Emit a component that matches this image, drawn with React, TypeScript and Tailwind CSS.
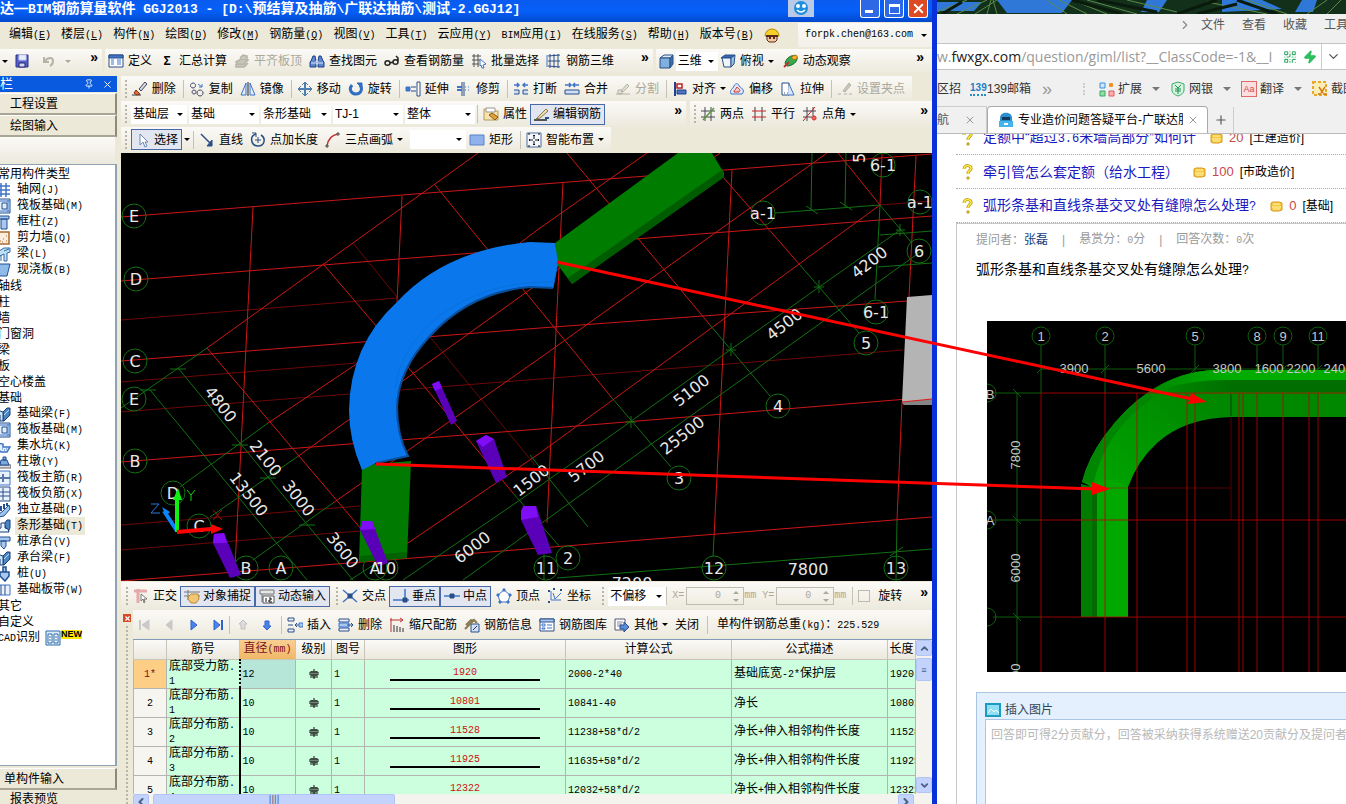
import { ReactNode } from 'react'
import { ChevronDown, ChevronUp, ChevronLeft, ChevronRight, Plus, X, Zap, QrCode, Pin } from 'lucide-react'

// [path, stroke, fill, stroke width]
type Shape = [string, string, string?, number?]

const NAVY = '#2a4f86'
const BLUE = '#3f74c8'
const SKY = '#a9c8f0'
const GRAY = '#b5b2a6'

const icons: Record<string, Shape[]> = {
  save: [['M2 2h12v12H2z', '#2c2f8c', '#5560c8'], ['M5 2h7v5H5z', '#c9d2f5', '#e8ecfb'], ['M5 10h6v4H5z', '#20246e', '#d5d8ea']],
  undo: [['M3 4v5h5M4 8c3-4 8-4 8 0 0 2-1 4-3 5', GRAY, 'none', 2]],
  define: [['M1 2h14v12H1z', NAVY, '#fff'], ['M1 2h14v3H1z', NAVY, BLUE], ['M3 7h3M3 9h3M3 11h3M9 7h4M9 9h4M9 11h4', BLUE]],
  slab: [['M2 9l5-3 7 1-4 4H3zM6 5l3-3 4 1v3M2 11v3h8l4-4', GRAY, '#c9c6bb', 1.5]],
  find: [['M2 8l2-5h2l1 5v6H1V9zM14 8l-2-5h-2L9 8v6h6V9z', '#1d3f86', '#5c86cf'], ['M7 8h2v3H7zM2 10h4M10 10h4', '#dbe7fa']],
  glasses: [['M1 10c0-3 5-3 5 0s-5 3-5 0M9 9c0-3 5-3 5 0s-5 3-5 0M6 10l3-1M14 9V5l-2-2', '#222', 'none', 1.5]],
  batch: [['M1 3h9M1 7h9M1 11h7M3 1v13M7 1v13', '#555'], ['M9 6l6 5-3 1 1 3-2 0-1-3-1 1z', BLUE, '#fff']],
  rebar3d: [['M2 3l12-1M2 8h12M2 13l12 1M4 1v14M8 1v14M12 1v14', NAVY], ['M1 2v12', BLUE]],
  cube: [['M2 5l4-3h9l-3 3z', NAVY, '#d8ebfb'], ['M2 5h10v10H2z', NAVY, '#7fb0df'], ['M12 5l3-3v9l-3 4z', NAVY, '#3b6ea8']],
  cubeTop: [['M1 5l4-3h10l-3 3z', NAVY, '#3568b8'], ['M2 5h9v9H4z', NAVY, '#eef5fc'], ['M11 5l4-3-1 9-3 3z', NAVY, '#9cc2ea']],
  orbit: [['M2 10c2-7 9-9 12-6 1 5-5 9-10 9z', '#0d6b2a', '#37a94e'], ['M9 4c3-3 6-2 5 1-1 2-4 2-5 0', '#b56a00', '#f2b62b'], ['M1 14l5-5', '#b33', 'none', 2]],
  erase: [['M0 14h9', '#333'], ['M4 9l4 4-3 1-3-2z', '#8b2b1a', '#d9762f'], ['M7 8l6-7 2 2-6 7z', '#445', '#d4d9e4']],
  copy: [['M4 2a2.500 2.500 0 1 0 .1 0M5 9a2 2 0 1 0 .1 0M11 9a3 3 0 1 0 .1 0', '#446'], ['M9 3l4 3M13 3v3h-3', BLUE]],
  mirror: [['M6 2v12H1zM10 2v12h5z', BLUE, '#e2ecfb'], ['M8 1v14', '#222']],
  move: [['M8 2v12M2 8h12', '#4f7fae', 'none', 2], ['M5 4l3-3 3 3M5 12l3 3 3-3M4 5L1 8l3 3M12 5l3 3-3 3', '#4f7fae']],
  rotate: [['M4 4c-4 5 0 9 4 9 5 0 7-5 4-9', '#2f6fc4', 'none', 3], ['M9 2h5v5z', '#2f6fc4', '#2f6fc4']],
  extend: [['M12 1h3v14h-3z', NAVY, '#fff'], ['M1 6h4v4H1z', BLUE, BLUE], ['M6 6h5M6 10h5', NAVY]],
  trim: [['M8 1v14M6 1v14', NAVY], ['M1 6h5M1 9h5', BLUE, 'none', 2], ['M9 6h1M12 6h1M9 9h1M12 9h1', BLUE]],
  breakI: [['M1 4h5M4 2l2 2-2 2M15 4h-5M12 2l-2 2 2 2', BLUE, 'none', 1.5], ['M1 9h5v4H1M15 9h-5v4h5', NAVY, '#cfe0f7']],
  merge: [['M1 4h6M5 2l2 2-2 2M15 4H9M11 2L9 4l2 2', BLUE, 'none', 1.5], ['M1 9h14v4H1z', NAVY, '#cfe0f7']],
  split: [['M1 13h14M3 9h4v4H3zM6 10l6-7 2 2-6 6z', GRAY, '#e3e0d6']],
  align: [['M3 1v14', '#23408a', 'none', 2], ['M5 3h5v4H5z', '#b22', '#fff', 1.5], ['M5 9h9v4H5z', '#23408a', '#4d74c4']],
  offset: [['M2 13c-2-4 2-5 3-8 2-4 5-2 5 0 4 3 6 5 3 8z', BLUE, '#dfe9f8'], ['M5 11c0-3 2-2 3-5 2 2 4 3 2 5z', '#c33', '#f7caca']],
  stretch: [['M2 2h7v12H2z', NAVY, '#fff'], ['M9 3l5 11H8', BLUE, '#d9e7fb'], ['M4 12h1M7 12h1', NAVY]],
  grip: [['M1 13h3M7 13h3M12 13h3M6 10l6-8 2 2-6 7z', GRAY, '#c9c6bb']],
  prop: [['M1 3h6l1 2h7v9H1z', '#b59a5c', '#f7e3ae'], ['M3 2h9v4H3z', '#999', '#fff'], ['M6 9l3-2 6 4-3 3z', '#8a5a18', '#e0a33c']],
  editRebar: [['M0 14h13', '#222', 'none', 1.5], ['M3 12l9-9 2 2-8 7-4 1z', '#8a7650', '#f2e2ad'], ['M11 12h4', NAVY, 'none', 2]],
  twoPt: [['M1 5h14M1 11h14M5 1v14M11 1v14', '#445'], ['M3 14L14 2', '#5a9a3a', 'none', 1.5]],
  parallel: [['M4 1v14M11 1v14', '#345'], ['M1 5h14M1 11h14', '#c22']],
  ptAngle: [['M5 1v14M11 1v9M1 5h13M1 11h9', '#445'], ['M1 15L13 1', '#c22'], ['M12 10a2 2 0 1 0 .1 0', '#c22', '#e66']],
  cursor: [['M5 2v11l3-3 2 5 2-1-2-4h3z', '#6a87b5', '#fff']],
  line: [['M2 2l11 11', NAVY, 'none', 1.5], ['M13 8v6H8z', NAVY, NAVY]],
  ptLen: [['M6 2c-7 2-5 12 2 12 7 0 8-8 3-11', NAVY, 'none', 1.5], ['M8 5v6M5 8h6M2 1h4v4', NAVY]],
  arc: [['M2 14C3 7 7 3 13 2', '#b33', 'none', 1.5], ['M12 1h2v2h-2zM1 13h2v2H1z', '#555', '#999']],
  rect: [['M1 3h14v10H1z', '#5b82c8', '#8fb1ec']],
  smart: [['M1 1h14v14H1z', '#4f6f9f', '#f4f8fe'], ['M8 3v4M8 9v4M3 8h4M9 8h4M7 4l1-1 1 1M7 12l1 1 1-1M4 7L3 8l1 1M12 7l1 1-1 1', '#111'], ['M2 2h2M12 2h2M2 14h2M12 14h2', '#111']],
  ortho: [['M1 3h13M5 1v14', '#e6a9a9', 'none', 3], ['M8 6v7l2-2 1 4 1-1-1-3h3z', '#777', '#fff']],
  snap: [['M0 4h16M0 8h16M4 2v10', '#777'], ['M5 8l2-2h7l1 5-3 4H7l-3-4z', '#b58a3a', '#f2c672']],
  dyn: [['M1 2h14v4H1zM3 6v8', '#777', '#e6e6e6'], ['M4 8h11v7H4z', '#555', '#fff'], ['M7 10v4M10 10h2v2h-2v2h3', '#111']],
  cross: [['M1 2l14 12M15 2L1 14', BLUE, 'none', 1.5], ['M6 6h4v4H6z', NAVY, NAVY]],
  perp: [['M12 1v12M0 12h16', BLUE, 'none', 1.5], ['M10 10h4v4h-4z', NAVY, NAVY]],
  mid: [['M0 8h16', BLUE, 'none', 1.5], ['M6 6h4v4H6z', NAVY, NAVY]],
  vertex: [['M8 2l6 5-2 7H4L2 7z', BLUE, '#fff'], ['M7 1h2v2H7zM13 6h2v2h-2zM1 6h2v2H1zM3 13h2v2H3zM11 13h2v2h-2z', BLUE, BLUE]],
  coord: [['M4 3v9h10M6 5l2 6 6-6', BLUE], ['M1 3h2M13 2h2M1 14h2M6 1h2', NAVY, 'none', 2]],
  insert: [['M1 1h6v3H1zM1 12h6v3H1z', NAVY, '#eef'], ['M1 8h5M8 8h7M10 6L8 8l2 2', NAVY], ['M12 6h4v4h-4z', BLUE, SKY]],
  remove: [['M1 2h10v3H1zM1 11h10v3H1z', NAVY, '#eef'], ['M1 6h10v4H1z', BLUE, SKY], ['M9 8h6M13 6l2 2-2 2', NAVY]],
  scale: [['M1 3h13M11 1l3 2-3 2M2 1v14', '#b33'], ['M5 8v7M8 9v6M11 10v5M14 11v4', '#333']],
  info: [['M7 7h8v8H7z', NAVY, '#cfe2fa'], ['M1 12l9-9 3 3M2 8l5-5 4 1', '#8a7a52', 'none', 2], ['M9 13l4-4', '#333']],
  lib: [['M1 2h14v12H1z', NAVY, '#fff'], ['M1 2h14v3H1z', NAVY, SKY], ['M3 7h3v2H3zM3 11h3v1H3zM8 8h5M8 11h5', BLUE]],
  other: [['M1 2h10v11H1z', '#557', '#fff'], ['M3 5h6M3 7h5M3 9h3', '#88a'], ['M6 8h4V5l5 5-5 5v-3H6z', NAVY, '#5b8ce0']],
  first: [['M3 3v10', '#c9c9c9', 'none', 2], ['M12 3v10L5 8z', '#c9c9c9', '#c9c9c9']],
  prev: [['M11 3v10L5 8z', '#c9c9c9', '#c9c9c9']],
  next: [['M6 3v10l6-5z', '#2f63d0', '#4b83ea']],
  last: [['M5 3v10l6-5z', '#2f63d0', '#4b83ea'], ['M13 3v10', '#2f63d0', 'none', 2]],
  up: [['M8 3l4 4h-2v5H6V7H4z', '#c0c0c0', '#dcdcdc']],
  down: [['M8 13l4-4h-2V4H6v5H4z', '#2f63d0', '#4b83ea']],
  grid: [['M1 4h14M1 8h14M1 12h14M6 1v14M11 1v14', BLUE, 'none', 1.5]],
  raft: [['M1 1h14v14H1zM7 5h5v6H7z', '#1f4f90', '#e5effb'], ['M4 2v12M1 13h14M1 3h14M13 2v12', BLUE]],
  column: [['M1 2h13v3H1zM6 5h6v10H6z', '#1f4f90', SKY]],
  wall: [['M2 2h12v12H2z', '#a96a30', '#fbeede', 1.5], ['M5 11h1M8 9h1M11 6h1M7 12h1M11 11h1', '#a96a30']],
  beam: [['M1 7l8-5h6v4l-3 1v8H9V8L1 12z', '#2c6aa8', '#bfe0f5'], ['M6 9v6M9 5l5-2', '#2c6aa8']],
  slab2: [['M1 2h14l-3 12H3z', '#1f4f90', '#8fbbe8']],
  fbeam: [['M8 6l4-4h3v7l-6 6H8z', '#153f7a', '#4a86c4'], ['M1 9l4-4 3 1v9H5V9z', '#153f7a', '#cfe4f7'], ['M9 9l5-5', '#bfe0ff']],
  pit: [['M3 5l5 1v3h7l-3 5H6L3 11', BLUE, '#e3effc', 1.5], ['M7 11h1M9 12h1M11 11h1', BLUE]],
  pier: [['M1 11h15v3H1z', '#666', '#ddd'], ['M6 6h6l2 5H5zM8 3h3v3H8z', '#1f4f90', '#7fa8dc']],
  mainbar: [['M1 1h14v14H1z', BLUE, '#e9f1fc'], ['M1 8h6M8 4v8M9 8h6', NAVY, 'none', 1.5]],
  negbar: [['M1 1h14v14H1zM1 6h14M1 10h14M8 2v12', NAVY, '#e9f1fc']],
  iso: [['M4 12l4-3 6-6 1 4-6 7-5 1z', '#1f4f90', '#9cc3ea'], ['M6 4v5M9 2v5M12 1v3', '#1f4f90', 'none', 2]],
  strip: [['M9 6l3-4h3v8l-2 4z', '#153f7a', '#4a86c4'], ['M3 14h11l-1-3-3-1V5H6v5l-3 1z', '#153f7a', '#eef6fd']],
  cap: [['M1 3h14v4H1zM6 7h5v5l-2 3-3-3z', '#1f4f90', SKY]],
  pile: [['M8 1h3v5H8zM5 6h9v4l-4 5-5-5z', '#1f4f90', SKY, 1.5]],
  band: [['M1 3h14v10H1z', BLUE, '#e9f1fc'], ['M6 3v10M10 3v10', NAVY]],
  cad: [['M1 1h14v14H1z', '#2c6aa8', '#dcecfb'], ['M3 4h4v9H3zM9 4h4v9H9z', '#2c6aa8', '#fff'], ['M4 7h2M4 10h2M10 7h2M10 10h2', '#2c6aa8']],
  coin: [['M5 4h6l3 1v7l-3 1H5l-2-1V5z', '#d8981a', '#f7c83e'], ['M5 6h7M4 9h9M5 11h7', '#fff3b0']],
  picture: [['M1 2h14v12H1z', '#1c9cc0', '#8fe0f4', 2], ['M3 11l3-4 3 3 2-2 3 3', '#fff']],
  quest: [['M4 5c0-5 8-4 7 0-1 2-3 2-3 5', '#b79a10', 'none', 3], ['M4 5c0-5 8-4 7 0-1 2-3 2-3 5', '#ffe94a', 'none', 1.5], ['M7 13h2v2H7z', '#b79a10', '#ffe94a']],
}

function Icon({ name }: { name: string }) {
  return (
    <svg className="size-4 shrink-0" viewBox="0 0 16 16">
      {icons[name].map(([d, stroke, fill, w], i) => (
        <path key={i} d={d} stroke={stroke} fill={fill ?? 'none'} strokeWidth={w ?? 1} />
      ))}
    </svg>
  )
}

// Latin runs go in a narrow mono face, half the width of a Chinese character
function Mix({ text, size = 'text-[10px]' }: { text: string; size?: string }) {
  return (
    <>
      {text.split(/([\x20-\x7e]+)/).map((part, i) =>
        i % 2 ? <span key={i} className={`whitespace-pre font-['Liberation_Mono',monospace] ${size}`}>{part}</span> : part,
      )}
    </>
  )
}

const Caret = () => <span className="h-0 w-0 shrink-0 border-x-[3px] border-t-[3px] border-x-transparent border-t-black" />
const Sep = () => <span className="mr-[5px] h-[18px] w-px shrink-0 bg-[#c5c2b8]" />
const Grip = () => <span className="mx-1 h-[18px] w-0 shrink-0 border-l-2 border-dotted border-[#b8b5a8]" />
const More = () => <button className="mb-2 h-4 px-1 text-[14px] leading-4 font-bold">»</button>

function Tool({ icon, label, off, caret, tight }: { icon: string; label: string; off?: boolean; caret?: boolean; tight?: boolean }) {
  return (
    <button disabled={off} className={`flex shrink-0 items-center gap-1 whitespace-nowrap ${tight ? 'pr-[3px]' : 'pr-[7px]'} ${off ? 'text-[#aca899]' : ''}`}>
      <Icon name={icon} />
      {label}
      {caret && <Caret />}
    </button>
  )
}

function Pressed({ icon, label }: { icon: string; label: string }) {
  return (
    <button className="flex h-[21px] shrink-0 items-center gap-[3px] border border-[#4a69a8] bg-[#e1e6f0] px-[3px] whitespace-nowrap">
      <Icon name={icon} />
      {label}
    </button>
  )
}

function Combo({ value, label, width }: { value: string; label: string; width: string }) {
  return (
    <span className={`flex h-[19px] shrink-0 items-center bg-white pr-1 ${width}`}>
      <select aria-label={label} className="min-w-0 flex-1 appearance-none bg-transparent pl-0.5 outline-none">
        <option>{value}</option>
      </select>
      <Caret />
    </span>
  )
}

const strip = 'flex items-center bg-linear-to-b from-[#fbfaf7] to-[#ece9dc]'

const menus = [
  ['编辑', 'E'], ['楼层', 'L'], ['构件', 'N'], ['绘图', 'D'], ['修改', 'M'], ['钢筋量', 'Q'], ['视图', 'V'], ['工具', 'T'],
  ['云应用', 'Y'], ['BIM应用', 'I'], ['在线服务', 'S'], ['帮助', 'H'], ['版本号', 'B'],
]

function TitleBar() {
  return (
    <header className="flex h-[22px] shrink-0 items-center bg-linear-to-b from-[#0a5bf0] via-[#0560f8] to-[#0248d0] pr-1 text-white">
      <h1 className="min-w-0 flex-1 overflow-hidden pb-1 text-[14px] leading-[18px] font-bold whitespace-nowrap">
        <Mix text="达—BIM钢筋算量软件 GGJ2013 - [D:\预结算及抽筋\广联达抽筋\测试-2.GGJ12]" size="text-[13px]" />
      </h1>
      <svg className="mr-[46px] mb-[5px] h-[17px] w-[26px]" viewBox="0 0 26 17">
        <path d="M0 0h26v17H0z" fill="#b9cbe6" />
        <circle cx="13" cy="8" r="7" fill="#1c8fe0" />
        <circle cx="10" cy="6" r="2" fill="#fff" />
        <circle cx="16" cy="6" r="2" fill="#fff" />
        <path d="M9 10q4 4 8 0" stroke="#fff" fill="none" strokeWidth="1.5" />
      </svg>
      <div className="flex gap-1 pb-1">
        <button aria-label="最小化" className="flex h-[18px] w-5 items-end rounded-b-[3px] border border-t-0 border-white bg-[#2f68e4] p-1">
          <span className="h-[3px] w-2 bg-white" />
        </button>
        <button aria-label="最大化" className="flex h-[18px] w-5 items-center justify-center rounded-b-[3px] border border-t-0 border-white bg-[#2f68e4]">
          <span className="h-[10px] w-[11px] border border-t-[3px] border-white" />
        </button>
        <button aria-label="关闭" className="flex h-[18px] w-5 items-center justify-center rounded-b-[3px] border border-t-0 border-white bg-[#dc4a26]">
          <X size={15} strokeWidth={3} />
        </button>
      </div>
    </header>
  )
}

function MenuBar() {
  return (
    <nav className="flex h-[26px] shrink-0 items-center bg-[#ece9d8] pl-[9px]">
      {menus.map(([name, key]) => (
        <button key={key} className="mr-[10px] shrink-0 whitespace-nowrap">
          <Mix text={name} />
          <span className="font-['Liberation_Mono',monospace] text-[10px]">(<u>{key}</u>)</span>
        </button>
      ))}
      <svg className="size-4 shrink-0" viewBox="0 0 16 16">
        <path d="M1 9a7 7 0 0 1 14 0z" fill="#f7cf2a" stroke="#b58a00" />
        <path d="M3 9h10v4l-2 2H5l-2-2z" fill="#f3c7a0" stroke="#5a2a1a" />
        <path d="M5 11h2M9 11h2M2 9h12" stroke="#5a2a1a" strokeWidth="2" />
      </svg>
      <button className="ml-auto flex h-6 shrink-0 items-center gap-2 bg-linear-to-b from-[#fbfaf7] to-[#f2f0e8] pr-[5px] pl-[7px] font-['Liberation_Mono',monospace] text-[10px]">
        forpk.chen@163.com <Caret />
      </button>
    </nav>
  )
}

function MainToolbar() {
  return (
    <div className="flex h-7 shrink-0 gap-[3px] bg-[#ece9d8] pt-px pb-[3px]">
      <div className={`${strip} w-[102px] shrink-0 pl-0.5`}>
        <Caret />
        <button aria-label="保存" className="ml-[6px]"><Icon name="save" /></button>
        <span className="ml-[6px]"><Sep /></span>
        <button aria-label="撤销" className="mr-2" disabled><Icon name="undo" /></button>
        <span className="h-0 w-0 border-x-[3px] border-t-[3px] border-x-transparent border-t-[#aca899]" />
        <span className="ml-auto"><More /></span>
      </div>
      <div className={`${strip} min-w-0 flex-[548] pl-[3px]`}>
        <Tool icon="define" label="定义" />
        <button className="flex shrink-0 items-center gap-1 pr-[7px]">
          <span className="w-4 text-center font-bold">Σ</span>汇总计算
        </button>
        <Tool icon="slab" label="平齐板顶" off />
        <Tool icon="find" label="查找图元" />
        <Tool icon="glasses" label="查看钢筋量" />
        <Tool icon="batch" label="批量选择" />
        <Tool icon="rebar3d" label="钢筋三维" />
        <span className="ml-auto"><More /></span>
      </div>
      <div className={`${strip} min-w-0 flex-[276] gap-0.5 pl-0.5`}>
        <Icon name="cube" />
        <Combo label="视图方式" value="三维" width="w-[42px]" />
        <Tool icon="cubeTop" label="俯视" caret />
        <Tool icon="orbit" label="动态观察" />
        <span className="ml-auto pr-1"><More /></span>
      </div>
    </div>
  )
}

const tree: [string, string?][] = [
  ['常用构件类型'], ['轴网(J)', 'grid'], ['筏板基础(M)', 'raft'], ['框柱(Z)', 'column'], ['剪力墙(Q)', 'wall'], ['梁(L)', 'beam'],
  ['现浇板(B)', 'slab2'], ['轴线'], ['柱'], ['墙'], ['门窗洞'], ['梁'], ['板'], ['空心楼盖'], ['基础'], ['基础梁(F)', 'fbeam'],
  ['筏板基础(M)', 'raft'], ['集水坑(K)', 'pit'], ['柱墩(Y)', 'pier'], ['筏板主筋(R)', 'mainbar'], ['筏板负筋(X)', 'negbar'],
  ['独立基础(P)', 'iso'], ['条形基础(T)', 'strip'], ['桩承台(V)', 'cap'], ['承台梁(F)', 'fbeam'], ['桩(U)', 'pile'],
  ['基础板带(W)', 'band'], ['其它'], ['自定义'], ['CAD识别'],
]

const panelBtn = 'h-[22px] shrink-0 border-r-2 border-b-2 border-t border-t-white border-r-[#8d8a7c] border-b-[#a9a695] bg-[#ece9d8] text-left'

function Sidebar() {
  return (
    <aside className="flex w-[117px] shrink-0 flex-col overflow-hidden bg-[#ece9d8]">
      <div className="mb-px flex h-4 shrink-0 items-center bg-[#0a5ae0] text-[13px] leading-4 text-white">
        栏
        <Pin size={10} className="mr-2 ml-auto" />
        <X size={11} className="mr-1" />
      </div>
      <button className={`${panelBtn} pl-[10px]`}>工程设置</button>
      <button className={`${panelBtn} pl-[10px]`}>绘图输入</button>
      <div className="mr-0.5 h-[27px] shrink-0 bg-linear-to-b from-[#fbfaf7] to-[#ece9dc]" />
      <ul className="min-h-0 flex-1 overflow-hidden border-y border-r-2 border-[#8fa3b5] bg-white pt-px">
        {tree.map(([label, icon], i) => (
          <li key={i} className={`flex h-4 items-center whitespace-nowrap ${icon ? '-ml-[5px]' : '-ml-0.5'}`}>
            {icon && <span className="mr-1"><Icon name={icon} /></span>}
            <span className={label === '条形基础(T)' ? 'bg-[#ece9d8] px-0.5' : icon ? 'px-0.5' : ''}>
              <Mix text={label} />
            </span>
            {label === 'CAD识别' && (
              <>
                <span className="ml-[5px]"><Icon name="cad" /></span>
                <b className="mb-2 bg-[#ffe800] text-[9px] leading-[9px]">NEW</b>
              </>
            )}
          </li>
        ))}
      </ul>
      <button className={`${panelBtn} mt-0.5 pl-1`}>单构件输入</button>
      <div className="h-[14px] shrink-0 overflow-hidden pl-[10px] leading-[18px]">报表预览</div>
    </aside>
  )
}

function DrawToolbars() {
  return (
    <div className="shrink-0 bg-[#ece9d8] pb-px">
      <div className={`${strip} mr-5 h-[25px]`}>
        <Grip /><span className="w-px" />
        <Tool icon="erase" label="删除" /><Sep />
        <Tool icon="copy" label="复制" />
        <Tool icon="mirror" label="镜像" /><Sep />
        <Tool icon="move" label="移动" />
        <Tool icon="rotate" label="旋转" /><Sep />
        <Tool icon="extend" label="延伸" />
        <Tool icon="trim" label="修剪" /><Sep />
        <Tool icon="breakI" label="打断" />
        <Tool icon="merge" label="合并" />
        <Tool icon="split" label="分割" off /><Sep />
        <Tool icon="align" label="对齐" caret tight />
        <Tool icon="offset" label="偏移" />
        <Tool icon="stretch" label="拉伸" /><Sep />
        <Tool icon="grip" label="设置夹点" off />
      </div>
      <div className="flex h-[26px] gap-1">
        <div className={`${strip} min-w-0 flex-[565]`}>
          <Grip />
          <div className="flex gap-0.5">
            <Combo label="楼层" value="基础层" width="w-[56px]" />
            <Combo label="构件类型" value="基础" width="w-[70px]" />
            <Combo label="构件" value="条形基础" width="w-[70px]" />
            <Combo label="构件名" value="TJ-1" width="w-[70px]" />
            <Combo label="分层" value="整体" width="w-[70px]" />
          </div>
          <span className="w-0.5" /><Sep />
          <Tool icon="prop" label="属性" tight />
          <Pressed icon="editRebar" label="编辑钢筋" />
          <span className="ml-auto"><More /></span>
        </div>
        <div className={`${strip} min-w-0 flex-[242]`}>
          <Grip />
          <Tool icon="twoPt" label="两点" />
          <Tool icon="parallel" label="平行" />
          <Tool icon="ptAngle" label="点角" caret />
          <span className="ml-auto"><More /></span>
        </div>
      </div>
      <div className={`${strip} h-[25px] w-[490px]`}>
        <Grip />
        <Pressed icon="cursor" label="选择" />
        <span className="w-1" /><Caret /><span className="w-2" /><Sep />
        <Tool icon="line" label="直线" />
        <Tool icon="ptLen" label="点加长度" />
        <Tool icon="arc" label="三点画弧" caret />
        <Combo label="画弧方式" value="" width="w-[56px]" />
        <span className="w-[7px]" />
        <Tool icon="rect" label="矩形" /><Sep />
        <Tool icon="smart" label="智能布置" caret />
      </div>
    </div>
  )
}

const redAxes = [
  'M121 217L530 185 932 154', 'M121 281L487 252M635 239L932 216', 'M121 361L540 328 907 301', 'M121 462L540 429 932 397',
  'M121 581L540 548 932 517', 'M253 207L235 567', 'M402 196L397 302', 'M563 182L547 523', 'M732 170L714 537', 'M882 154L880 205',
  'M916 156L909 297M902 402L897 520', 'M207 348L478 153', 'M268 423L358 363M520 243L540 228 647 153', 'M297 457L720 153',
  'M333 503L540 358 827 153', 'M408 543L540 453 880 205', 'M207 348L362 530', 'M324 265L377 327M408 367L513 493',
  'M435 185L488 250M522 288L612 398', 'M567 153L710 325', 'M723 177L800 265', 'M838 153L880 205',
]
const dimAxes = ['M121 320L397 298', 'M121 382L357 363', 'M121 412L540 379 903 350', 'M121 525L360 506', 'M121 550L360 531', 'M353 243L397 297', 'M430 337L535 465', 'M880 205L932 201']
const greenAxes = [
  'M121 408L207 348', 'M150 390L307 580', 'M178 368L353 580', 'M268 423L180 487', 'M297 457L210 517', 'M333 503L253 560',
  'M408 543L350 580', 'M403 580L520 500 630 422 730 350 900 230', 'M463 580L650 445 923 250', 'M612 398L671 467', 'M710 325L770 396',
  'M800 265L859 333', 'M880 205L911 242', 'M513 493L560 547', 'M530 455L588 527', 'M775 213L880 205', 'M557 578L932 549',
  'M812 153L811 210', 'M846 153L845 207', 'M880 205L875 299', 'M880 235L932 231', 'M878 267L932 263', 'M897 520L896 580',
  'M714 537L713 556', 'M544 545L544 580', 'M170 369h16M140 390h16M232 445h16M260 478h16M299 525h16',
  'M631 416v12M626 422h10M731 343v13M726 350h10M819 280v13M814 287h10M900 224v12M896 230h9M806 206l12 8M840 202l12 8M890 556l13-9',
]
const bubbles: [string, number, number][] = [
  ['E', 134, 216], ['D', 136, 279], ['C', 135, 361], ['E', 134, 399], ['B', 135, 461], ['D', 173, 493], ['C', 199, 526], ['B', 246, 568],
  ['A', 281, 568], ['A', 375, 568], ['10', 386, 568], ['11', 546, 568], ['12', 714, 568], ['13', 896, 568], ['2', 568, 558],
  ['3', 679, 478], ['4', 778, 406], ['5', 866, 343], ['6', 919, 251], ['a-1', 763, 213], ['6-1', 883, 165], ['6-1', 876, 312], ['a-1', 920, 202],
]
const dims: [string, number, number, number][] = [
  ['4800', 221, 404, 52], ['2100', 266, 458, 52], ['13500', 249, 494, 52], ['3000', 299, 498, 52], ['3600', 343, 550, 52],
  ['6000', 472, 547, -38], ['1500', 531, 480, -38], ['5700', 586, 466, -38], ['25500', 682, 435, -38], ['5100', 691, 390, -38],
  ['4500', 784, 324, -38], ['4200', 869, 262, -38], ['7800', 808, 569, 0], ['7200', 632, 583, 0], ['5', 859, 158, -90],
]
const bars = [
  ['M432 384l7-3 18 40-6 4z', 'M432 384l7-3 3 7-7 3z'],
  ['M476 441l10-6 8 4 13 38-11 6z', 'M476 441l10-6 8 4-11 8z'],
  ['M521 511l2-5h13l16 47-14 2-17-35z', 'M521 520v-9l3-5h12l2 11z'],
  ['M360 530l2-9h10l16 42-10 3z', 'M360 530l2-9h10l3 8z'],
  ['M213 543l1-9 10-1 17 42-11 3z', 'M213 543l1-9 10-1 3 10z'],
]

function ModelView() {
  return (
    <svg className="min-h-0 w-full flex-1 bg-black" viewBox="121 153 811 428" preserveAspectRatio="xMidYMid slice">
      <g fill="none" stroke="#6c0808">{dimAxes.map((d) => <path key={d} d={d} />)}</g>
      <g fill="none" stroke="#cc1616">{redAxes.map((d) => <path key={d} d={d} />)}</g>
      <g fill="none" stroke="#127012">
        {greenAxes.map((d) => <path key={d} d={d} />)}
        {bubbles.map(([t, x, y], i) => <circle key={t + i} cx={x} cy={y} r="12" />)}
      </g>
      <path d="M907 297l25-2v110l-28 0-2-3z" fill="#b4b4b4" />
      <path d="M902 402l30-3v6h-28z" fill="#858585" />
      <path d="M902 402l30-3" stroke="#e01818" />
      <path d="M555 243L678 153h34l12 20v4L572 284l-15-20z" fill="#007c00" />
      <path d="M568 278L722 170l2 7L572 284z" fill="#005c00" />
      <path d="M362 468l13-4 36-3-4 97-48 4z" fill="#007a00" />
      <path d="M359 562l2-6 46-4v6z" fill="#006200" />
      <path d="M362 470Q349 440 349 410 350 345 397 302 445 250 530 242L555 243 558 262 553 288 530 287Q470 292 430 336 398 370 397 407 397 435 408 456L376 463z" fill="#0a78ec" />
      <path d="M553 288L530 287Q470 292 430 336 398 370 397 407 397 435 408 456L376 463" fill="none" stroke="#0a4f9c" strokeWidth="2" />
      <path d="M558 262l-5 26M395 388Q402 345 440 315 490 280 553 282" fill="none" stroke="#0870dc" />
      {bars.map(([body, top]) => (
        <g key={body}>
          <path d={body} fill="#5a00b8" />
          <path d={top} fill="#7f0df5" />
        </g>
      ))}
      <g fill="#e8e8e8" fontFamily="DejaVu Sans, sans-serif" fontSize="16" textAnchor="middle">
        {bubbles.map(([t, x, y], i) => <text key={t + i} x={x} y={y + 6}>{t}</text>)}
        {dims.map(([t, x, y, r]) => <text key={t + x} x={x} y={y + 6} transform={`rotate(${r} ${x} ${y})`}>{t}</text>)}
      </g>
      <path d="M177 531l-13-20" stroke="#0a84ff" strokeWidth="4" />
      <path d="M162 507l8 5-4 4z" fill="#0a84ff" />
      <path d="M177 532V498" stroke="#10f010" strokeWidth="4" />
      <path d="M173 500l5-12 4 12z" fill="#10f010" />
      <path d="M177 532l34-3" stroke="#f00" strokeWidth="4" />
      <path d="M211 524l12 5-12 5z" fill="#f00" />
      <g fill="none">
        <path d="M151 504h8l-8 9h9" stroke="#2a78e0" />
        <path d="M187 490l4 5 4-5M191 495v6" stroke="#10d010" />
        <path d="M213 510l9 10M222 510l-9 10" stroke="#a01010" />
      </g>
    </svg>
  )
}

function Spin({ name }: { name: string }) {
  return (
    <label className="flex shrink-0 items-center font-['Liberation_Mono',monospace] text-[10px] text-[#aca899]">
      <span className="w-[14px]">{name}=</span>
      <span className="flex h-[18px] w-[58px] items-center border border-[#bfbcaf] pr-1">
        <input className="w-full min-w-0 bg-transparent pr-3 text-right" defaultValue="0" disabled />
        <span className="flex flex-col gap-[5px]">
          <span className="h-0 w-0 border-x-[3px] border-b-[3px] border-x-transparent border-b-[#aca899]" />
          <span className="h-0 w-0 border-x-[3px] border-t-[3px] border-x-transparent border-t-[#aca899]" />
        </span>
      </span>
      mm
    </label>
  )
}

function SnapBar() {
  return (
    <div className={`${strip} mt-px h-7 shrink-0 pl-px`}>
      <Grip /><span className="w-px" />
      <Tool icon="ortho" label="正交" tight />
      <Pressed icon="snap" label="对象捕捉" />
      <Pressed icon="dyn" label="动态输入" />
      <span className="w-0.5" /><Grip />
      <Tool icon="cross" label="交点" tight />
      <Pressed icon="perp" label="垂点" />
      <Pressed icon="mid" label="中点" />
      <span className="w-[5px]" />
      <Tool icon="vertex" label="顶点" />
      <Tool icon="coord" label="坐标" />
      <Grip />
      <Combo label="偏移方式" value="不偏移" width="w-[58px]" />
      <Sep />
      <Spin name="X" />
      <span className="w-[6px]" />
      <Spin name="Y" />
      <span className="w-[6px]" /><Sep />
      <label className="flex shrink-0 items-center gap-2 whitespace-nowrap">
        <input type="checkbox" className="size-3 appearance-none border border-[#bfbcaf]" disabled />旋转
      </label>
      <span className="ml-auto"><More /></span>
    </div>
  )
}

const rows = [
  ['底部受力筋', '1', '12', '1920', '2000-2*40', '基础底宽-2*保护层'],
  ['底部分布筋', '1', '10', '10801', '10841-40', '净长'],
  ['底部分布筋', '2', '10', '11528', '11238+58*d/2', '净长+伸入相邻构件长度'],
  ['底部分布筋', '3', '10', '11925', '11635+58*d/2', '净长+伸入相邻构件长度'],
  ['底部分布筋', '4', '10', '12322', '12032+58*d/2', '净长+伸入相邻构件长度'],
]
const scrollBtn = 'flex shrink-0 items-center justify-center rounded-[2px] border border-[#b2c4f5] bg-[#c3d3fd] text-[#4d6185]'

function RebarTable() {
  return (
    <div className="flex h-[155px] overflow-hidden border-t border-[#7f9db9] bg-white">
      <div className="min-w-0 flex-1 overflow-hidden">
        <table className="w-full table-fixed border-collapse">
          <colgroup>
            <col className="w-[33px]" /><col className="w-[73px]" /><col className="w-[56px]" /><col className="w-[36px]" />
            <col className="w-[33px]" /><col className="w-[201px]" /><col className="w-[166px]" /><col className="w-[156px]" /><col />
          </colgroup>
          <thead>
            <tr className="h-[19px] bg-linear-to-b from-[#fbfaf7] to-[#ebe8de] whitespace-nowrap *:border *:border-t-0 *:border-[#c8c5b8] *:p-0 *:font-normal">
              <th></th>
              <th>筋号</th>
              <th className="bg-linear-to-b from-[#f9cf92] to-[#f0b765] text-[#7a1020]"><Mix text="直径(mm)" /></th>
              <th>级别</th>
              <th>图号</th>
              <th>图形</th>
              <th>计算公式</th>
              <th>公式描述</th>
              <th className="overflow-hidden">长度</th>
            </tr>
          </thead>
          <tbody>
            {rows.map(([name, no, dia, len, formula, desc], i) => (
              <tr key={name + no} className="h-[29px] bg-[#ccffdd] *:border *:border-[#b3b6b0] *:px-0.5 *:py-0">
                <th className={`text-center font-normal ${i ? 'bg-[#f7f5f0]' : 'bg-[#fdcf86] text-[#7a1020]'}`}><Mix text={i ? `${i + 1}` : '1*'} /></th>
                <td className="leading-[13px] whitespace-nowrap">
                  <Mix text={`${name}.`} /><br /><Mix text={no} />
                </td>
                <td className={i ? 'border-l-2! border-l-black!' : 'border-l-2! border-dotted! border-black! bg-[#b5e6d8]'}><Mix text={dia} /></td>
                <td className="text-center">
                  <svg className="inline size-[10px]" viewBox="0 0 10 10"><path d="M5 0v10M1 8h8M1 3h8v3H1zM3 2v5M7 2v5" stroke="#111" fill="none" /></svg>
                </td>
                <td><Mix text="1" /></td>
                <td>
                  <span className="mx-auto flex w-[150px] items-center justify-center border-b-2 border-black font-['Liberation_Mono',monospace] text-[10px] leading-[13px] text-[#d01010]">{len}</span>
                </td>
                <td><Mix text={formula} /></td>
                <td className="whitespace-nowrap"><Mix text={desc} /></td>
                <td className="overflow-hidden"><Mix text={len} /></td>
              </tr>
            ))}
          </tbody>
        </table>
      </div>
      <div className="flex w-4 shrink-0 flex-col bg-[#f4f3ee]">
        <button aria-label="向上" className={`${scrollBtn} h-4`}><ChevronUp size={11} strokeWidth={4} /></button>
        <span className={`${scrollBtn} mt-0.5 h-[23px] text-[9px]`}>≡</span>
        <button aria-label="向下" className={`${scrollBtn} mt-auto mb-px h-4`}><ChevronDown size={11} strokeWidth={4} /></button>
      </div>
    </div>
  )
}

function RebarPanel() {
  return (
    <section className="flex shrink-0 bg-[#ece9d8]">
      <div className="flex w-3 shrink-0 flex-col items-center pt-1">
        <button aria-label="关闭面板" className="flex size-2 items-center justify-center bg-[#d8492a] text-white"><X size={7} strokeWidth={4} /></button>
        <span className="mt-1 flex-1 border-l-2 border-dotted border-[#b8b5a8]" />
      </div>
      <div className="min-w-0 flex-1">
        <div className={`${strip} h-[29px] whitespace-nowrap`}>
          <div className="flex gap-2 px-1">
            {['first', 'prev', 'next', 'last'].map((n) => <button key={n} aria-label={n}><Icon name={n} /></button>)}
          </div>
          <Sep />
          <div className="flex gap-2 pr-[6px]">
            {['up', 'down'].map((n) => <button key={n} aria-label={n}><Icon name={n} /></button>)}
          </div>
          <Sep />
          <Tool icon="insert" label="插入" />
          <Tool icon="remove" label="删除" />
          <Tool icon="scale" label="缩尺配筋" />
          <Tool icon="info" label="钢筋信息" />
          <Tool icon="lib" label="钢筋图库" />
          <Tool icon="other" label="其他" caret />
          <button className="pr-2">关闭</button>
          <Sep />
          <span className="pl-1"><Mix text="单构件钢筋总重(kg)：225.529" /></span>
        </div>
        <RebarTable />
        <div className="flex h-[10px] items-start overflow-hidden bg-[#f4f3ee] pr-[18px]">
          <button aria-label="向左" className={`${scrollBtn} mr-1 h-4 w-4`}><ChevronLeft size={12} strokeWidth={4} /></button>
          <span className={`${scrollBtn} h-4 w-[31%] pb-1 text-[10px]`}>||||</span>
          <button aria-label="向右" className={`${scrollBtn} ml-auto h-4 w-4`}><ChevronRight size={12} strokeWidth={4} /></button>
        </div>
      </div>
    </section>
  )
}

const platLines = [1041, 1105, 1137, 1187, 1195, 1239, 1243, 1257, 1283, 1309, 1318]
const platAxes: [string, number][] = [['1', 1041], ['2', 1105], ['5', 1195], ['8', 1257], ['9', 1283], ['11', 1318]]
const platDims: [string, number][] = [['3900', 1074], ['5600', 1151], ['3800', 1227], ['1600', 1269], ['2200', 1301], ['2400', 1338]]

function PlanImage() {
  return (
    <svg className="h-[351px] w-full bg-black" viewBox="987 321 359 351" preserveAspectRatio="xMinYMin slice">
      <defs>
        <linearGradient id="bend" gradientUnits="userSpaceOnUse" x1="1105" y1="490" x2="1190" y2="390">
          <stop offset="0" stopColor="#00a400" />
          <stop offset="1" stopColor="#008800" />
        </linearGradient>
        <linearGradient id="top" gradientUnits="userSpaceOnUse" x1="1160" y1="0" x2="1225" y2="0">
          <stop offset="0" stopColor="#008c00" />
          <stop offset="1" stopColor="#00ac00" />
        </linearGradient>
        <linearGradient id="shade" gradientUnits="userSpaceOnUse" x1="1165" y1="0" x2="1235" y2="0">
          <stop offset="0" stopColor="#006e00" stopOpacity="0" />
          <stop offset="1" stopColor="#006e00" />
        </linearGradient>
      </defs>
      <g fill="none" stroke="#0d5f0d">
        <path d="M1017 393V672M993 393h48M993 520h48M993 617h48M1041 369h305" />
        {platAxes.map(([t, x]) => (
          <g key={t}>
            <circle cx={x} cy="336" r="9" />
            <path d={`M${x} 345V393M${x - 4} 373l8-8`} />
          </g>
        ))}
        <path d="M1013 389l8 8M1013 516l8 8M1013 613l8 8M987 384a9 9 0 0 1 0 18M987 511a9 9 0 0 1 0 18M987 608a9 9 0 0 1 0 18" />
      </g>
      <path d="M1082 482Q1088 458 1105 435 1125 408 1147 393 1180 370 1217 370H1346V417H1231Q1185 418 1157 443 1138 460 1128 487L1110 495z" fill="url(#bend)" />
      <path d="M1082 482Q1088 458 1105 435 1125 408 1147 393L1154 397Q1105 430 1093 485z" fill="#008600" />
      <path d="M1160 385Q1190 370 1217 370H1346V380H1225Q1190 380 1160 390z" fill="url(#top)" />
      <path d="M1165 388Q1195 380 1225 380H1346V392H1165z" fill="url(#shade)" />
      <path d="M1081 487l12-2 18-6 17 8V617H1081z" fill="#00a800" />
      <path d="M1081 484l16 4V617H1081z" fill="#007c00" />
      <path d="M1092 487l5 1V617h-5z" fill="#006c00" />
      <g stroke="#c00000">
        {platLines.map((x) => <path key={x} d={`M${x} 393V672`} opacity="0.8" />)}
        <path d="M1041 393H1346M1041 520H1346M1041 617H1346" opacity="0.8" />
        <path d="M1105 488H1231M1231 417V520" opacity="0.45" />
      </g>
      <path d="M1231 394v22" stroke="#024002" />
      <g fill="#c8c8c8" fontFamily="Liberation Sans, sans-serif" fontSize="13" textAnchor="middle">
        {platAxes.map(([t, x]) => <text key={t} x={x} y="341">{t}</text>)}
        {platDims.map(([t, x]) => <text key={t} x={x} y="373">{t}</text>)}
        <text x="990" y="399">B</text>
        <text x="990" y="525">A</text>
        <text x="1020" y="455" transform="rotate(-90 1020 455)">7800</text>
        <text x="1020" y="568" transform="rotate(-90 1020 568)">6000</text>
        <text x="1020" y="678" transform="rotate(-90 1020 678)">7800</text>
      </g>
    </svg>
  )
}

function Question({ title, score, tag }: { title: string; score: string; tag: string }) {
  return (
    <li className="flex h-[34px] items-center border-b border-dotted border-[#aaa] pl-1 text-[14px] whitespace-nowrap">
      <Icon name="quest" />
      <a href="#" className="ml-[7px] text-[#1a1ac0]"><Mix text={title} size="text-[12px]" /></a>
      <span className="ml-[12px] flex items-center gap-[5px] text-[12px]">
        <Icon name="coin" />
        <span className="font-['Liberation_Sans',sans-serif] text-[13px] text-[#c84848]">{score}</span>
        <span className="ml-px">[{tag}]</span>
      </span>
    </li>
  )
}

const bookmark = 'flex shrink-0 items-center gap-[3px]'
const GrayCaret = () => <span className="mx-[10px] h-0 w-0 shrink-0 border-x-4 border-t-4 border-x-transparent border-t-[#777]" />

function Browser() {
  const tab = (icon: ReactNode) => <span className="mr-1 shrink-0">{icon}</span>
  return (
    <section className="flex min-w-0 flex-col overflow-hidden bg-white whitespace-nowrap">
      <svg className="h-[14px] w-full shrink-0 bg-[#12301a]" viewBox="0 0 409 14" preserveAspectRatio="none">
        <path d="M60 0h75l-10 13H70zM0 2h45l-8 9H0zM210 0h20l-8 12h-18zM285 0h40l20 9-60 3zM365 0h15l-4 12h-18z" fill="#2f78d8" />
        <path d="M0 12l30-12M20 14L50 0M38 14L60 0M50 14l4-14M60 14L56 0M130 14L110 0M150 14L122 0M170 14L135 0M200 14L150 0M240 12L190 0M330 14L270 2M350 14L310 0M370 14l20-14M390 14l14-14" stroke="#5d8a4a" />
        <path d="M135 0l50 14M160 0l60 12M240 14l40-14M260 14l40-10M300 0l40 14M5 14l20-12" stroke="#0a1a0c" strokeWidth="3" />
      </svg>
      <nav className="flex h-[29px] shrink-0 items-center gap-[17px] bg-[#f0f0f0] pb-[7px] pl-[241px] text-[#555]">
        <span className="-mr-[8px] text-[#888]"><ChevronRight size={14} /></span>
        <button>文件</button><button>查看</button><button>收藏</button><button>工具</button>
      </nav>
      <div className="flex h-[27px] shrink-0 items-center border-y border-[#c4c4c4] bg-white">
        <div className="min-w-0 flex-[340] overflow-hidden font-['Open_Sans',sans-serif] text-[14px] leading-5 text-[#999]">
          w.<span className="text-[#222]">fwxgx.com</span>/question/giml/list?__ClassCode=-1&amp;__I
        </div>
        <div className="flex min-w-0 flex-[62] items-center overflow-hidden">
          <QrCode size={14} className="shrink-0 text-[#39ad6a]" />
          <Zap size={14} className="ml-[6px] shrink-0 text-[#2cbf5c]" fill="currentColor" />
          <span className="mx-1 h-[25px] w-px shrink-0 bg-[#ccc]" />
          <ChevronDown size={15} className="shrink-0 text-[#555]" />
        </div>
      </div>
      <div className="flex h-[37px] shrink-0 items-center bg-[#f0f0f0] text-[#333]">
        <span className="mr-[9px]">区招</span>
        <b className="mr-px h-[14px] w-4 border-b-2 border-dotted border-[#2b8bc8] text-[10px] leading-3 text-[#1d7fc4]">139</b>
        139邮箱
        <span className="ml-[11px] text-[18px] text-[#999]">»</span>
        <span className="mr-[14px] ml-[31px] h-3 border-l-2 border-dotted border-[#ccc]" />
        <button className={bookmark}>
          <svg className="size-4" viewBox="0 0 16 16" fill="none"><path d="M1 2h5v5H1z" stroke="#3b8fe0" fill="#cfe6fb" /><path d="M12 2v4M10 4h4" stroke="#f0902a" strokeWidth="3" /><path d="M1 10h5v5H1z" stroke="#35a860" fill="#8fe0a8" /><path d="M10 10h5v5h-5z" stroke="#e05a5a" fill="#f9b0b0" /></svg>
          扩展
        </button>
        <GrayCaret />
        <button className={bookmark}>
          <svg className="size-4" viewBox="0 0 16 16"><path d="M8 1l6 2v6c0 3-3 5-6 6-3-1-6-3-6-6V3z" fill="#d8f5e2" stroke="#39ad6a" /><path d="M5 4l3 3 3-3M8 7v6M5 8h6M5 10h6" stroke="#1f9050" fill="none" /></svg>
          网银
        </button>
        <GrayCaret />
        <button className={bookmark}>
          <span className="flex size-4 items-center justify-center border border-[#e06a6a] bg-[#fbdede] text-[9px] text-[#d04848]">Aa</span>
          翻译
        </button>
        <GrayCaret />
        <button className={bookmark}>
          <svg className="size-4" viewBox="0 0 16 16"><path d="M1 1h13v13H1z" fill="#fdeeb8" stroke="#e8a82a" strokeDasharray="3 2" strokeWidth="2" /><path d="M7 6l4 6M13 6l-4 6M6 13h3M11 13h4" stroke="#d07a10" strokeWidth="1.5" /></svg>
          截图
        </button>
      </div>
      <div className="flex h-[27px] shrink-0 items-end border-b border-[#bbb] bg-[#f0f0f0]">
        <button className="flex h-[27px] w-[50px] shrink-0 items-center justify-between border-t border-r border-[#ccc] pr-[10px] text-[#555]">
          航 <X size={12} className="text-[#999]" />
        </button>
        <button className="flex h-[27px] w-[221px] shrink-0 items-center rounded-t-[4px] border border-b-0 border-[#aaa] bg-white pr-2 pl-[10px]">
          {tab(
            <svg className="size-4" viewBox="0 0 16 16">
              <path d="M2 6c0-7 12-7 12 0v8H2z" fill="#2a8fd0" />
              <path d="M4 5h8v3H4z" fill="#123a5c" />
              <path d="M1 9h14v6H1z" fill="#46b4ec" />
              <path d="M6 11h4v2H6z" fill="#fff" />
            </svg>,
          )}
          <span className="min-w-0 flex-1 overflow-hidden text-left">专业造价问题答疑平台-广联达服务新干线</span>
          <X size={12} className="ml-1 shrink-0 text-[#999]" />
        </button>
        <button aria-label="新标签页" className="flex h-[26px] w-[26px] shrink-0 items-center justify-center border-r border-[#ccc] text-[#555]"><Plus size={14} /></button>
      </div>
      <main className="flex min-h-0 flex-1 flex-col overflow-hidden pl-[19px]">
        <div className="flex h-[89px] shrink-0 flex-col justify-end overflow-hidden pt-px">
          <ul>
            <Question title="定额中“超过3.6米墙高部分”如何计" score="20" tag="土建造价" />
            <Question title="牵引管怎么套定额（给水工程）" score="100" tag="市政造价" />
            <Question title="弧形条基和直线条基交叉处有缝隙怎么处理?" score="0" tag="基础" />
          </ul>
        </div>
        <article className="min-h-0 flex-1 border-t border-l border-[#c8c8c8] pl-[19px]">
          <p className="mt-2 flex h-4 items-center gap-[14px] text-[#999]">
            <span>提问者：<a href="#" className="text-[#1a3a7a]">张磊</a></span>|
            <span><Mix text="悬赏分：0分" /></span>|
            <span><Mix text="回答次数：0次" /></span>
          </p>
          <h2 className="mt-[11px] h-5 text-[14px] leading-5"><Mix text="弧形条基和直线条基交叉处有缝隙怎么处理?" size="text-[12px]" /></h2>
          <div className="mt-[42px] pl-[11px]"><PlanImage /></div>
          <div className="mt-[20px] flex h-[200px] flex-col border border-r-0 border-[#aac6e4] bg-[#e4f0fd] pl-2 text-[#345]">
            <button className="flex h-[26px] shrink-0 items-end gap-1 pb-px"><Icon name="picture" />插入图片</button>
            <textarea
              aria-label="回答"
              className="flex-1 resize-none overflow-hidden border border-r-0 border-[#aac6e4] bg-white px-[5px] py-[7px] whitespace-nowrap placeholder:text-[#b8b8b8]"
              placeholder="回答即可得2分贡献分，回答被采纳获得系统赠送20贡献分及提问者悬赏分"
            />
          </div>
        </article>
      </main>
    </section>
  )
}

// red callouts that link the model to the posted picture
function Callouts() {
  return (
    <svg className="pointer-events-none absolute inset-0 h-full w-full" viewBox="0 0 1346 804" preserveAspectRatio="none">
      <path d="M557 262L1192 399M376 464L1096 489" stroke="#f00" strokeWidth="3" />
      <path d="M1207 402l-19 2 3-11zM1110 489l-18-7v13z" fill="#f00" />
    </svg>
  )
}

export default function App() {
  return (
    <div className="relative grid h-screen grid-cols-[minmax(0,937fr)_minmax(0,409fr)] grid-rows-[minmax(0,1fr)] overflow-hidden font-['Liberation_Sans','Noto_Sans_CJK_SC',sans-serif] text-[12px] leading-4 text-black">
      <section className="flex min-w-0 flex-col overflow-hidden border-r-[5px] border-[#0831d9] bg-[#ece9d8]">
        <TitleBar />
        <MenuBar />
        <MainToolbar />
        <div className="flex min-h-0 flex-1 gap-1">
          <Sidebar />
          <div className="flex min-w-0 flex-1 flex-col">
            <DrawToolbars />
            <ModelView />
            <SnapBar />
            <RebarPanel />
          </div>
        </div>
      </section>
      <Browser />
      <Callouts />
    </div>
  )
}
